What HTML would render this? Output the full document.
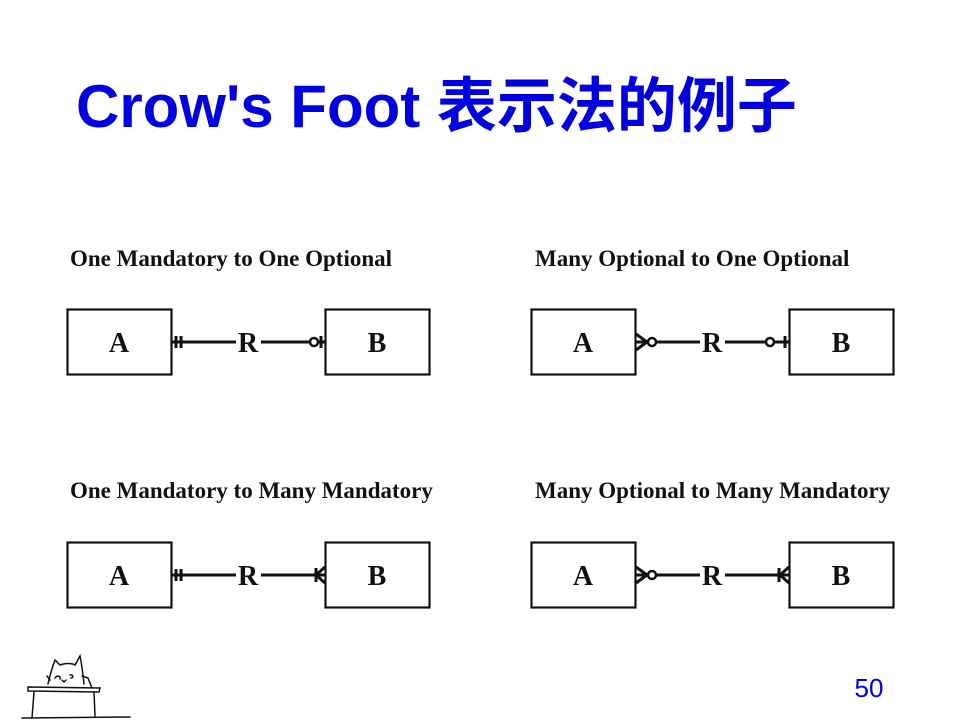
<!DOCTYPE html>
<html><head><meta charset="utf-8"><style>
html,body{margin:0;padding:0;background:#fff;width:960px;height:720px;overflow:hidden}
</style></head><body>
<svg width="960" height="720" xmlns="http://www.w3.org/2000/svg">
<text x="76" y="127" font-family="Liberation Sans, 'Noto Sans CJK SC', sans-serif" font-weight="bold" font-size="60" fill="#0000e0">Crow's Foot 表示法的例子</text>
<g font-family="Liberation Serif, serif" font-weight="bold" font-size="23" fill="#111">
<text x="70" y="266">One Mandatory to One Optional</text>
<text x="535" y="266">Many Optional to One Optional</text>
<text x="70" y="498">One Mandatory to Many Mandatory</text>
<text x="535" y="498">Many Optional to Many Mandatory</text>
</g>
<g fill="none" stroke="#111" stroke-width="2.2">
<rect x="67.5" y="309.5" width="104" height="65"/>
<rect x="325.5" y="309.5" width="104" height="65"/>
<rect x="531.5" y="309.5" width="104" height="65"/>
<rect x="789.5" y="309.5" width="104" height="65"/>
<rect x="67.5" y="542.5" width="104" height="65"/>
<rect x="325.5" y="542.5" width="104" height="65"/>
<rect x="531.5" y="542.5" width="104" height="65"/>
<rect x="789.5" y="542.5" width="104" height="65"/>
</g>
<g font-family="Liberation Serif, serif" font-weight="bold" font-size="28" fill="#111" text-anchor="middle">
<text x="119" y="352">A</text><text x="377" y="352">B</text>
<text x="583" y="352">A</text><text x="841" y="352">B</text>
<text x="119" y="585">A</text><text x="377" y="585">B</text>
<text x="583" y="585">A</text><text x="841" y="585">B</text>
<text x="248" y="352">R</text><text x="712" y="352">R</text>
<text x="248" y="585">R</text><text x="712" y="585">R</text>
</g>
<g fill="none" stroke="#111" stroke-width="3">
<line x1="172" y1="342" x2="236" y2="342"/><line x1="261" y1="342" x2="310" y2="342"/>
<line x1="176" y1="336" x2="176" y2="348"/><line x1="181" y1="336" x2="181" y2="348"/>
<circle cx="314" cy="342" r="4" stroke-width="2.5"/><line x1="321" y1="336" x2="321" y2="348"/><line x1="318" y1="342" x2="325" y2="342"/>
<line x1="656" y1="342" x2="700" y2="342"/><line x1="725" y1="342" x2="766" y2="342"/>
<path d="M636 334 L647 342 L636 350" /><line x1="636" y1="342" x2="647" y2="342"/>
<circle cx="652" cy="342" r="4" stroke-width="2.5"/>
<circle cx="770" cy="342" r="4" stroke-width="2.5"/><line x1="785" y1="336" x2="785" y2="348"/><line x1="774" y1="342" x2="789" y2="342"/>
<line x1="172" y1="575" x2="236" y2="575"/><line x1="261" y1="575" x2="325" y2="575"/>
<line x1="176" y1="569" x2="176" y2="581"/><line x1="181" y1="569" x2="181" y2="581"/>
<line x1="316" y1="568" x2="316" y2="582"/><path d="M325 567 L316 575 L325 583"/>
<line x1="656" y1="575" x2="700" y2="575"/><line x1="725" y1="575" x2="789" y2="575"/>
<path d="M636 567 L647 575 L636 583"/><line x1="636" y1="575" x2="647" y2="575"/>
<circle cx="652" cy="575" r="4" stroke-width="2.5"/>
<line x1="779" y1="568" x2="779" y2="582"/><path d="M789 567 L780 575 L789 583"/>
</g>
<g fill="none" stroke="#111" stroke-width="1.5" stroke-linecap="round">
<path d="M48 684 C50 675 52 668 55 660 L60 665 C65 663 72 663 75 665 L80 656 C82 665 83 675 84 684"/>
<path d="M28 687 L100 688 L99 692 L28 691 Z"/>
<path d="M34 692 L32 718"/><path d="M94 692 L95 716"/>
<path d="M82 676 L88 678 L92 688"/><path d="M47 676 L50 680"/>
<path d="M55 678 c2 -3 6 -2 5 1"/><path d="M70 675 c3 -1 4 3 1 3"/>
<path d="M62 680 l2 2 l2 -2"/>
<path d="M22 718 L130 717"/>
</g>
<text x="869" y="697" font-family="Liberation Sans, sans-serif" font-size="26" fill="#0000e0" text-anchor="middle">50</text>
</svg>
</body></html>
